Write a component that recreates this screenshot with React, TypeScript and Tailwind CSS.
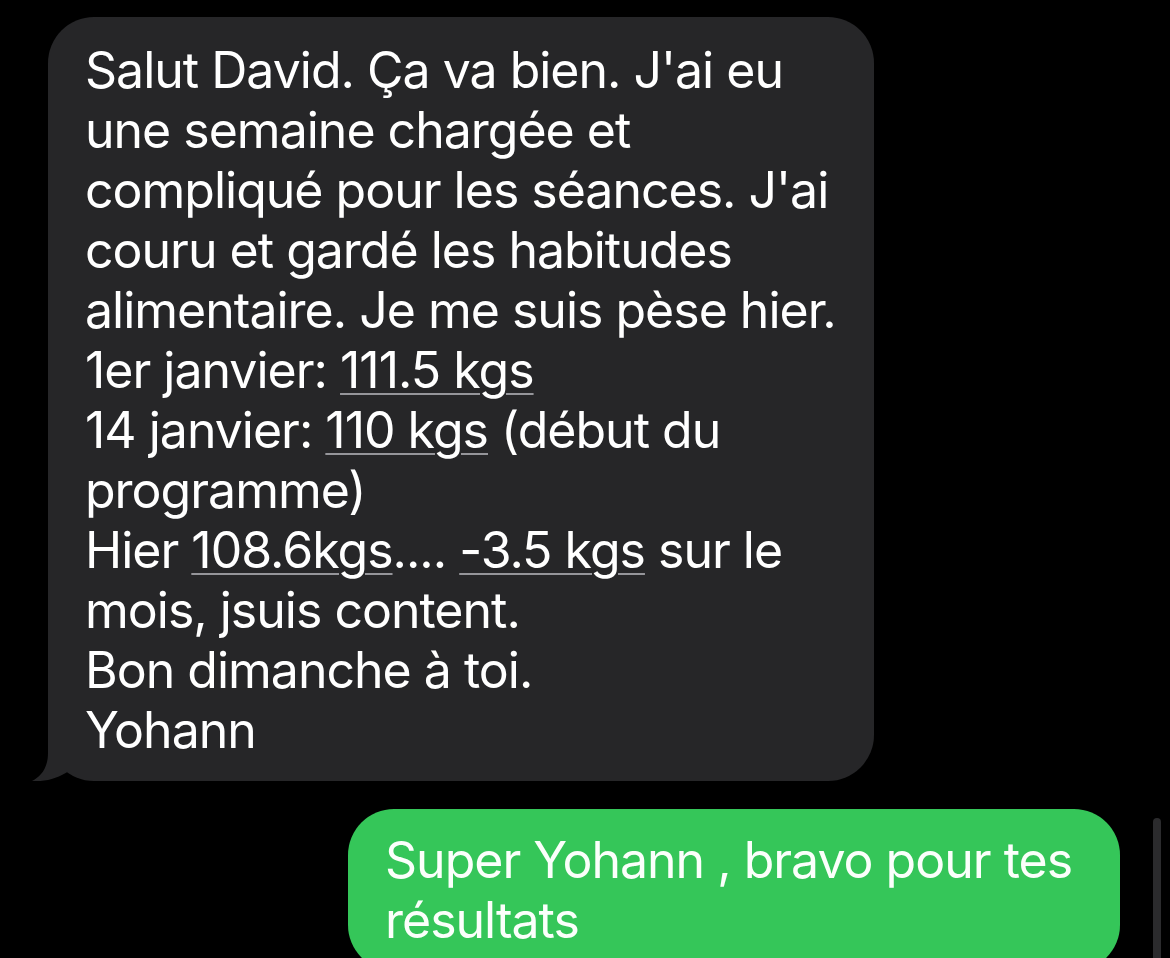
import React from 'react'

const U = ({ children }: { children: React.ReactNode }) => (
  <span className="underline decoration-[#95959a] decoration-2 underline-offset-[5px]">{children}</span>
)

const received: React.ReactNode[] = [
  'Salut David. Ça va bien. J\'ai eu',
  'une semaine chargée et',
  'compliqué pour les séances. J\'ai',
  'couru et gardé les habitudes',
  'alimentaire. Je me suis pèse hier.',
  <>1er janvier: <U>111.5 kgs</U></>,
  <>14 janvier: <U>110 kgs</U> (début du</>,
  'programme)',
  <>Hier <U>108.6kgs</U>.... <U>-3.5 kgs</U> sur le</>,
  'mois, jsuis content.',
  'Bon dimanche à toi.',
  'Yohann',
]

function Tail() {
  return (
    <svg className="absolute left-[-18px] bottom-0" width="80" height="50" viewBox="0 0 80 50">
      <path d="M18 0 L18 22 C18 38 10 46 2 50 C16 51 28 47 39 40 L39 0 Z" fill="#262628" />
    </svg>
  )
}

export default function App() {
  return (
    <div
      className="relative h-[958px] w-[1170px] overflow-hidden bg-black pt-[17px] text-[50px] leading-[60px] tracking-[-1px] text-white"
      style={{ fontFamily: 'Inter, "Noto Sans", sans-serif' }}
    >
      <div className="relative ml-[48px] w-[826px] rounded-[46px] bg-[#262628] pl-[37px] pt-[23px] pb-[21px]">
        {received.map((line, i) => (
          <div key={i} className="whitespace-nowrap">{line}</div>
        ))}
        <Tail />
      </div>

      <div className="ml-[348px] mt-[28px] w-[772px] rounded-[46px] bg-[#35c659] pl-[37px] pt-[21px] pb-[21px] text-[#fbfffb]">
        <div className="whitespace-nowrap">Super Yohann , bravo pour tes</div>
        <div className="whitespace-nowrap">résultats</div>
      </div>

      <div className="absolute left-[1153px] top-[818px] h-[160px] w-[8px] rounded-full bg-[#2b2b2d]" />
    </div>
  )
}
